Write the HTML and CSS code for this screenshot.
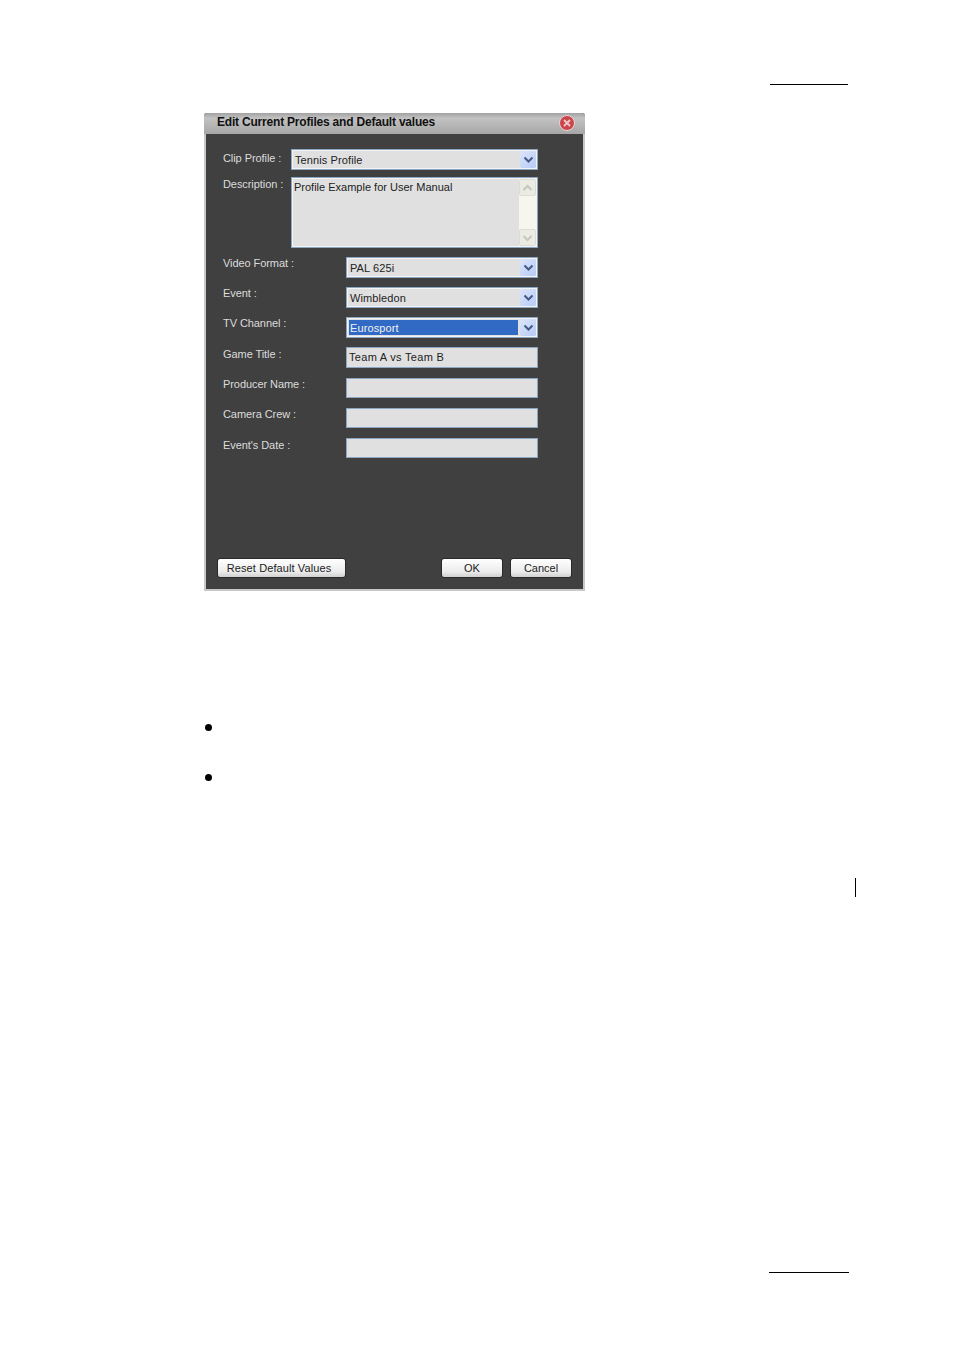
FILE: index.html
```html
<!DOCTYPE html>
<html lang="en">
<head>
    <meta charset="UTF-8">
    <meta name="viewport" content="width=device-width, initial-scale=1.0">
    <title>Edit Current Profiles and Default values</title>
    <link rel="stylesheet" href="styles.css">
</head>
<body>
    <div class="page">
        <div class="header-rule"></div>

        <div class="dialog">
            <div class="title-bar">
                <span class="title-text">Edit Current Profiles and Default values</span>
                <svg class="close-icon" width="16" height="16" viewBox="0 0 16 16">
                    <circle cx="8" cy="8" r="7.5" fill="#c9474c" stroke="#e9d6d6"/>
                    <path d="M5 5l6 6M11 5l-6 6" stroke="#f0c4c4" stroke-width="2"/>
                </svg>
            </div>
            <div class="dialog-body">
                <div class="row row-top">
                    <label class="field-label label-clip">Clip Profile :</label>
                    <div class="combo">
                        <span class="combo-value">Tennis Profile</span>
                        <span class="combo-btn"><svg width="11" height="8" viewBox="0 0 11 8"><path d="M1.5 1.5l4 4 4-4" fill="none" stroke="#445a84" stroke-width="2"/></svg></span>
                    </div>
                </div>
                <div class="row row-top">
                    <label class="field-label label-desc">Description :</label>
                    <div class="memo">
                        <span class="memo-text">Profile Example for User Manual</span>
                        <div class="scrollbar">
                            <span class="scroll-btn"><svg width="11" height="8" viewBox="0 0 11 8"><path d="M1.5 6l4-4 4 4" fill="none" stroke="#c4c8bc" stroke-width="2"/></svg></span>
                            <span class="scroll-btn"><svg width="11" height="8" viewBox="0 0 11 8"><path d="M1.5 2l4 4 4-4" fill="none" stroke="#c4c8bc" stroke-width="2"/></svg></span>
                        </div>
                    </div>
                </div>
                <div class="row row-wide row-first">
                    <label class="field-label">Video Format :</label>
                    <div class="combo">
                        <span class="combo-value">PAL 625i</span>
                        <span class="combo-btn"><svg width="11" height="8" viewBox="0 0 11 8"><path d="M1.5 1.5l4 4 4-4" fill="none" stroke="#445a84" stroke-width="2"/></svg></span>
                    </div>
                </div>
                <div class="row row-wide">
                    <label class="field-label">Event :</label>
                    <div class="combo">
                        <span class="combo-value">Wimbledon</span>
                        <span class="combo-btn"><svg width="11" height="8" viewBox="0 0 11 8"><path d="M1.5 1.5l4 4 4-4" fill="none" stroke="#445a84" stroke-width="2"/></svg></span>
                    </div>
                </div>
                <div class="row row-wide">
                    <label class="field-label">TV Channel :</label>
                    <div class="combo">
                        <span class="combo-value selected">Eurosport</span>
                        <span class="combo-btn"><svg width="11" height="8" viewBox="0 0 11 8"><path d="M1.5 1.5l4 4 4-4" fill="none" stroke="#445a84" stroke-width="2"/></svg></span>
                    </div>
                </div>
                <div class="row row-wide row-text">
                    <label class="field-label">Game Title :</label>
                    <div class="text-input">Team A vs Team B</div>
                </div>
                <div class="row row-wide row-text row-empty">
                    <label class="field-label">Producer Name :</label>
                    <div class="text-input"></div>
                </div>
                <div class="row row-wide row-text row-empty">
                    <label class="field-label">Camera Crew :</label>
                    <div class="text-input"></div>
                </div>
                <div class="row row-wide row-text row-empty row-date">
                    <label class="field-label">Event's Date :</label>
                    <div class="text-input"></div>
                </div>
                <div class="button-row">
                    <button class="btn btn-reset">Reset Default Values</button>
                    <button class="btn btn-ok">OK</button>
                    <button class="btn btn-cancel">Cancel</button>
                </div>
            </div>
        </div>

        <ul class="bullets">
            <li></li>
            <li></li>
        </ul>

        <div class="change-bar"></div>
        <div class="footer-rule"></div>
    </div>
</body>
</html>
```

FILE: styles.css
```css
html, body {
    margin: 0;
    padding: 0;
    background-color: white;
}

.page {
    height: 1350px;
    overflow: hidden;
    font-family: "Liberation Sans", Arial, sans-serif;
}

.header-rule {
    width: 78px;
    height: 1px;
    margin: 84px 0 0 770px;
    background-color: #000;
}

.dialog {
    width: 381px;
    height: 478px;
    margin: 28px 0 0 204px;
    box-sizing: border-box;
    background-color: #404040;
    border-radius: 3px 3px 0 0;
    display: flex;
    flex-direction: column;
}

.title-bar {
    height: 21px;
    flex: none;
    display: flex;
    align-items: center;
    justify-content: space-between;
    padding: 0 10px 0 13px;
    background: linear-gradient(#a2a2a2, #c2c2c2 25%, #a6a6a6);
    border-radius: 3px 3px 0 0;
}

.title-text {
    font-size: 12px;
    font-weight: bold;
    letter-spacing: -0.2px;
    color: #111;
    padding-bottom: 3px;
}

.close-icon {
    display: block;
    margin-bottom: 1px;
}

.dialog-body {
    flex: 1;
    display: flex;
    flex-direction: column;
    padding: 15px 11px 11px 17px;
    border-left: 2px solid #c8c8c8;
    border-right: 2px solid #c8c8c8;
    border-bottom: 2px solid #c8c8c8;
}

.row {
    display: flex;
    align-items: flex-start;
    margin-bottom: 9px;
    padding-right: 34px;
}

.row-top {
    margin-bottom: 7px;
}

.row-first {
    margin-top: 2px;
}

.field-label {
    flex: none;
    width: 123px;
    font-size: 11px;
    line-height: 13px;
    color: #dcdcdc;
    letter-spacing: -0.07px;
}

.row-top .field-label {
    width: 68px;
}

.label-clip {
    padding-top: 3px;
}

.label-desc {
    padding-top: 1px;
}

.row-text .field-label {
    padding-top: 1px;
}

.row-date .field-label {
    padding-top: 2px;
}

.combo,
.text-input,
.memo {
    flex: 1;
    box-sizing: border-box;
    border: 1px solid #8ba6c2;
    background-color: #e0e0e0;
    font-size: 11px;
    color: #222;
}

.combo {
    height: 21px;
    display: flex;
    padding: 1px;
    box-shadow: inset 0 0 0 1px #f4f4f4;
}

.combo-value {
    flex: 1;
    line-height: 16px;
    padding: 0 1px;
    margin: 1px 2px 1px 1px;
    letter-spacing: 0.1px;
}

.combo-value.selected {
    background-color: #316ac5;
    color: #f0f0f0;
    line-height: 17px;
}

.combo-btn {
    flex: none;
    width: 16px;
    display: flex;
    align-items: center;
    justify-content: center;
    background: linear-gradient(135deg, #dbe5fb, #b7cbf6);
    border-radius: 2px;
}

.memo {
    height: 71px;
    display: flex;
    padding: 1px;
    box-shadow: inset 0 0 0 1px #f4f4f4;
}

.memo-text {
    flex: 1;
    padding: 1px;
    line-height: 14px;
}

.scrollbar {
    flex: none;
    width: 17px;
    display: flex;
    flex-direction: column;
    justify-content: space-between;
    background-color: #f6f6ee;
}

.scroll-btn {
    height: 17px;
    display: flex;
    align-items: center;
    justify-content: center;
    background-color: #ebebe4;
    border: 1px solid #dcdcd4;
    box-sizing: border-box;
    border-radius: 2px;
}

.text-input {
    height: 21px;
    line-height: 19px;
    padding: 0 2px;
    letter-spacing: 0.3px;
}

.row-empty .text-input {
    height: 20px;
    margin-top: 1px;
}

.button-row {
    display: flex;
    gap: 7px;
    margin-top: auto;
    margin-left: -6px;
}

.btn {
    height: 20px;
    padding: 0;
    font-family: inherit;
    font-size: 11px;
    color: #222;
    border: 1px solid #2a2a2a;
    border-radius: 3px;
    background: linear-gradient(#ffffff, #ececec 70%, #d0d0d0);
}

.btn-reset {
    width: 129px;
    margin-right: 88px;
    padding-right: 5px;
    letter-spacing: 0.1px;
}

.btn-ok {
    width: 62px;
}

.btn-cancel {
    width: 62px;
}

.bullets {
    list-style: none;
    margin: 0;
    padding: 0 0 0 205px;
}

.bullets li {
    width: 7px;
    height: 7px;
    border-radius: 50%;
    background-color: #000;
    margin-top: 43px;
}

.bullets li:first-child {
    margin-top: 133px;
}

.change-bar {
    width: 1px;
    height: 19px;
    margin: 97px 0 0 855px;
    background-color: #000;
}

.footer-rule {
    width: 80px;
    height: 1px;
    margin: 375px 0 0 769px;
    background-color: #000;
}
```
